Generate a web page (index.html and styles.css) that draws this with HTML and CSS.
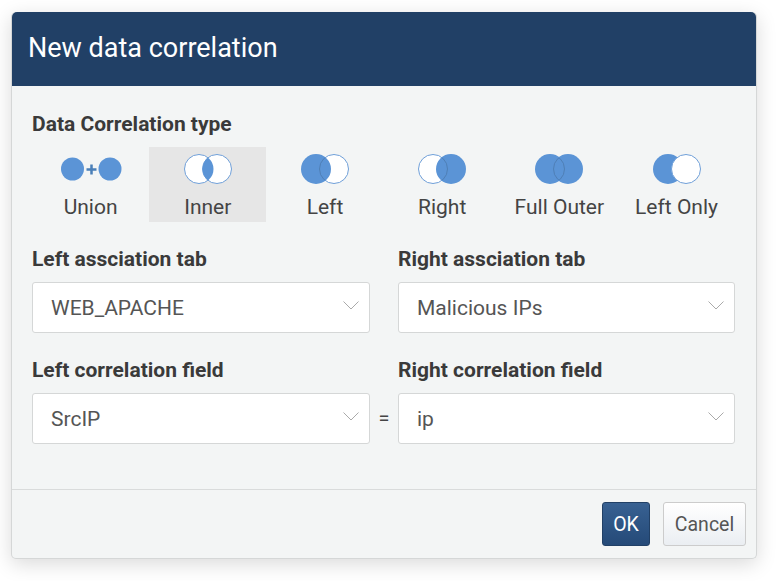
FILE: index.html
```html
<!DOCTYPE html>
<html lang="en">
<head>
    <meta charset="UTF-8" />
    <meta name="viewport" content="width=device-width, initial-scale=1" />
    <title>New data correlation</title>
    <link rel="stylesheet" href="styles.css">
</head>
<body>

<svg class="defs" width="0" height="0" aria-hidden="true">
    <defs>
        <clipPath id="clipLeft"><circle cx="15" cy="15" r="14.5" /></clipPath>
        <clipPath id="clipRight"><circle cx="33" cy="15" r="14.5" /></clipPath>
    </defs>
</svg>

<div class="modal">
    <div class="modal-header">New data correlation</div>

    <div class="modal-body">
        <div class="field-label">Data Correlation type</div>

        <div class="types">
            <div class="type">
                <svg class="venn" viewBox="0 0 62 30" width="62" height="30">
                    <circle class="fill" cx="12.5" cy="15" r="11.5" />
                    <path class="plus" d="M26.5 15.5h10M31.5 10.5v10" />
                    <circle class="fill" cx="50" cy="15" r="11.5" />
                </svg>
                <span>Union</span>
            </div>
            <div class="type selected">
                <svg class="venn" viewBox="0 0 48 30" width="48" height="30">
                    <circle class="blank" cx="15" cy="15" r="14.5" />
                    <circle class="blank" cx="33" cy="15" r="14.5" />
                    <circle class="fill" cx="33" cy="15" r="14.5" clip-path="url(#clipLeft)" />
                </svg>
                <span>Inner</span>
            </div>
            <div class="type">
                <svg class="venn" viewBox="0 0 48 30" width="48" height="30">
                    <circle class="blank" cx="33" cy="15" r="14.5" />
                    <circle class="fill" cx="15" cy="15" r="15" />
                    <circle class="edge" cx="33" cy="15" r="14.5" clip-path="url(#clipLeft)" />
                </svg>
                <span>Left</span>
            </div>
            <div class="type">
                <svg class="venn" viewBox="0 0 48 30" width="48" height="30">
                    <circle class="blank" cx="15" cy="15" r="14.5" />
                    <circle class="fill" cx="33" cy="15" r="15" />
                    <circle class="edge" cx="15" cy="15" r="14.5" clip-path="url(#clipRight)" />
                </svg>
                <span>Right</span>
            </div>
            <div class="type">
                <svg class="venn" viewBox="0 0 48 30" width="48" height="30">
                    <circle class="fill" cx="15" cy="15" r="15" />
                    <circle class="fill" cx="33" cy="15" r="15" />
                    <circle class="edge" cx="33" cy="15" r="14.5" clip-path="url(#clipLeft)" />
                    <circle class="edge" cx="15" cy="15" r="14.5" clip-path="url(#clipRight)" />
                </svg>
                <span>Full Outer</span>
            </div>
            <div class="type">
                <svg class="venn" viewBox="0 0 48 30" width="48" height="30">
                    <circle class="fill" cx="15" cy="15" r="15" />
                    <circle class="blank" cx="33" cy="15" r="14.5" />
                </svg>
                <span>Left Only</span>
            </div>
        </div>

        <div class="field-row">
            <div class="field">
                <div class="field-label">Left assciation tab</div>
                <div class="select">
                    <span>WEB_APACHE</span>
                    <svg class="chevron" viewBox="0 0 16 9" width="16" height="9"><path d="M.5.5 8 8 15.5.5" /></svg>
                </div>
            </div>
            <div class="equals"></div>
            <div class="field">
                <div class="field-label">Right assciation tab</div>
                <div class="select">
                    <span>Malicious IPs</span>
                    <svg class="chevron" viewBox="0 0 16 9" width="16" height="9"><path d="M.5.5 8 8 15.5.5" /></svg>
                </div>
            </div>
        </div>

        <div class="field-row">
            <div class="field">
                <div class="field-label">Left correlation field</div>
                <div class="select">
                    <span>SrcIP</span>
                    <svg class="chevron" viewBox="0 0 16 9" width="16" height="9"><path d="M.5.5 8 8 15.5.5" /></svg>
                </div>
            </div>
            <div class="equals">=</div>
            <div class="field">
                <div class="field-label">Right correlation field</div>
                <div class="select">
                    <span>ip</span>
                    <svg class="chevron" viewBox="0 0 16 9" width="16" height="9"><path d="M.5.5 8 8 15.5.5" /></svg>
                </div>
            </div>
        </div>
    </div>

    <div class="modal-footer">
        <button class="btn btn-primary">OK</button>
        <button class="btn">Cancel</button>
    </div>
</div>

</body>
</html>
```

FILE: styles.css
```css
body {
    font-family: Roboto, "Liberation Sans", sans-serif;
    background: #fff;
    margin: 0;
    min-height: 581px;
    box-sizing: border-box;
    padding: 12px 0 0 11px;
    color: #444;
}
.defs {
    position: absolute;
}
.modal {
    width: 744px;
    height: 546px;
    background: #f3f5f5;
    border: 1px solid #d5d7d7;
    border-top: 0;
    border-radius: 5px;
    box-shadow: 0 5px 20px rgba(0,0,0,0.15);
    display: flex;
    flex-direction: column;
}
.modal-header {
    height: 74px;
    box-sizing: border-box;
    background: #214066;
    color: #fff;
    font-size: 27px;
    line-height: 72px;
    padding-left: 16px;
    border-radius: 5px 5px 0 0;
}
.modal-body {
    flex: 1;
    padding: 25px 20px 0 20px;
}
.field-label {
    font-size: 21px;
    font-weight: 700;
    line-height: 26px;
    color: #3a3a3a;
}
.types {
    display: grid;
    grid-template-columns: repeat(6, 117.2px);
    margin-top: 10px;
    margin-bottom: 24px;
}
.type {
    height: 75px;
    display: flex;
    flex-direction: column;
    align-items: center;
    padding-top: 7px;
    box-sizing: border-box;
    font-size: 21px;
}
.type span {
    margin-top: 10px;
    line-height: 26px;
}
.type.selected {
    background: #e6e6e6;
}
.venn .fill {
    fill: #5b94d6;
}
.venn .blank {
    fill: #fff;
    stroke: #6f9fd8;
}
.venn .edge {
    fill: none;
    stroke: #4f7fb5;
}
.venn .plus {
    fill: none;
    stroke: #4a7fb8;
    stroke-width: 2.5;
}
.field-row {
    display: grid;
    grid-template-columns: 338px 28px 337px;
    margin-bottom: 24px;
}
.field .field-label {
    margin-bottom: 10px;
}
.select {
    height: 51px;
    box-sizing: border-box;
    background: #fff;
    border: 1px solid #d5d7d7;
    border-radius: 3px;
    display: flex;
    align-items: center;
    justify-content: space-between;
    padding: 0 10px 0 18px;
    font-size: 21px;
    color: #555;
}
.chevron {
    margin-bottom: 4px;
}
.chevron path {
    fill: none;
    stroke: #aaa;
}
.equals {
    align-self: end;
    height: 51px;
    line-height: 51px;
    text-align: center;
    font-size: 20px;
    color: #444;
}
.modal-footer {
    height: 69px;
    box-sizing: border-box;
    border-top: 1px solid #d9dbdb;
    padding: 12px 10px 0 0;
    display: flex;
    justify-content: flex-end;
    gap: 13px;
}
.btn {
    height: 44px;
    width: 83px;
    padding: 0;
    font-family: inherit;
    font-size: 19.5px;
    color: #555;
    background: linear-gradient(#fff, #eaeef2);
    border: 1px solid #ccc;
    border-radius: 3px;
}
.btn-primary {
    width: 48px;
    color: #fff;
    background: linear-gradient(#386192, #254a78);
    border-color: #214066;
}
```
